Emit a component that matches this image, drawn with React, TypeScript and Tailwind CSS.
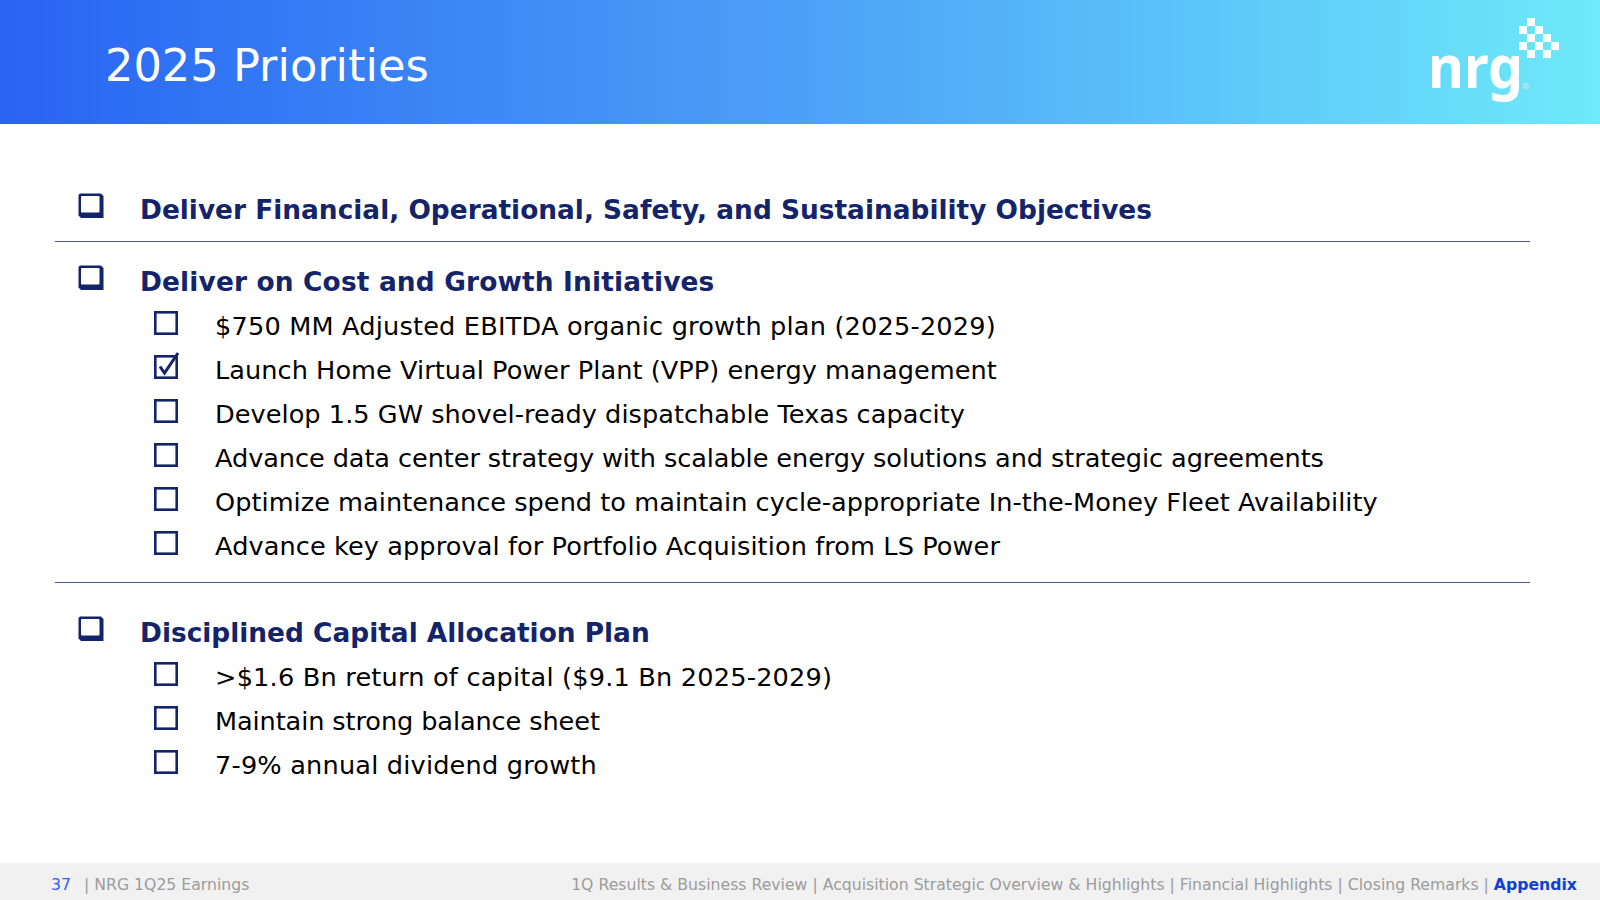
const sans = "font-['DejaVu_Sans',Verdana,sans-serif]"

const sections = [
  {
    title: 'Deliver Financial, Operational, Safety, and Sustainability Objectives',
    track: '',
    items: [],
  },
  {
    title: 'Deliver on Cost and Growth Initiatives',
    track: 'tracking-[0.16px]',
    items: [
      { text: '$750 MM Adjusted EBITDA organic growth plan (2025-2029)', track: 'tracking-[0.185px]' },
      { text: 'Launch Home Virtual Power Plant (VPP) energy management', track: 'tracking-[0.04px]', done: true },
      { text: 'Develop 1.5 GW shovel-ready dispatchable Texas capacity', track: 'tracking-[0.04px]' },
      { text: 'Advance data center strategy with scalable energy solutions and strategic agreements', track: 'tracking-[-0.085px]' },
      { text: 'Optimize maintenance spend to maintain cycle-appropriate In-the-Money Fleet Availability', track: 'tracking-[0.025px]' },
      { text: 'Advance key approval for Portfolio Acquisition from LS Power', track: 'tracking-[0.085px]' },
    ],
  },
  {
    title: 'Disciplined Capital Allocation Plan',
    track: '',
    items: [
      { text: '>$1.6 Bn return of capital ($9.1 Bn 2025-2029)', track: 'tracking-[0.195px]' },
      { text: 'Maintain strong balance sheet', track: 'tracking-[-0.105px]' },
      { text: '7-9% annual dividend growth', track: 'tracking-[0.19px]' },
    ],
  },
]

const navLinks = ['1Q Results & Business Review', 'Acquisition Strategic Overview & Highlights', 'Financial Highlights', 'Closing Remarks']

const pixels = [
  [1, 0], [0, 1], [2, 1], [1, 2], [3, 2], [0, 3], [2, 3], [4, 3], [1, 4], [3, 4],
]

function Logo() {
  return (
    <svg width="136" height="90" viewBox="0 0 136 90" className="shrink-0">
      <text x="4" y="70" fill="#fff" fontFamily="'Noto Sans', sans-serif" fontSize="60" fontWeight="700" textLength="95" lengthAdjust="spacingAndGlyphs">nrg</text>
      {pixels.map(([c, r]) => (
        <rect key={`${c}-${r}`} x={95 + c * 8} y={r * 8} width="8" height="8" fill="#fff" />
      ))}
      <circle cx="102" cy="68" r="3.2" fill="#a4dff2" />
    </svg>
  )
}

function HeadBox() {
  return (
    <svg width="26" height="25" viewBox="0 0 26 25" className="shrink-0 mb-[9px]">
      <path d="M0.5 2 L2 0.5 H23 L25.5 3 V25 H3 L0.5 22.5 Z" fill="#14246a" />
      <rect x="3" y="3" width="18.5" height="16.5" rx="1" fill="#fff" />
    </svg>
  )
}

function ItemBox({ done }: { done?: boolean }) {
  return (
    <svg width="26" height="28" viewBox="0 0 26 28" className="shrink-0 overflow-visible mb-[7px]">
      <rect x="1.3" y="3.3" width="21.4" height="21.4" fill="none" stroke="#14246a" strokeWidth="2.6" />
      {done && <path d="M6 13.5 L10.5 20 L24 0" fill="none" stroke="#14246a" strokeWidth="3" />}
    </svg>
  )
}

export default function App() {
  return (
    <div className={`w-[1600px] h-[900px] flex flex-col bg-white overflow-hidden ${sans}`}>
      <header className="h-[124px] shrink-0 flex items-start justify-between pl-[105px] pr-[40px] bg-gradient-to-r from-[#2a63f2] via-[#4da0f7] to-[#6eeaf9]">
        <h1 className="mt-[37px] text-[44.7px] leading-[58px] text-white">2025 Priorities</h1>
        <div className="mt-[18px]"><Logo /></div>
      </header>

      <main className="flex-1 pl-[55px] pr-[70px] pt-[68px]">
        {sections.map((s, i) => (
          <section key={s.title} className={i === 0 ? 'pb-[13px] border-b border-[#4a5a96]' : i === 1 ? 'pt-[22px] pb-[14px] border-b border-[#4a5a96]' : 'pt-[32px]'}>
            <div className="flex items-center h-[36px] pl-[23px]">
              <HeadBox />
              <span className={`ml-[36px] text-[26.4px] font-bold text-[#14246a] whitespace-nowrap ${s.track}`}>{s.title}</span>
            </div>
            {s.items.length > 0 && (
              <div className="mt-[4px]">
                {s.items.map(it => (
                  <div key={it.text} className="flex items-center h-[44px] pl-[99px]">
                    <ItemBox done={it.done} />
                    <span className={`ml-[35px] text-[25.6px] text-black whitespace-nowrap ${it.track}`}>{it.text}</span>
                  </div>
                ))}
              </div>
            )}
          </section>
        ))}
      </main>

      <footer className="h-[37px] shrink-0 flex items-center justify-between bg-[#f1f1f1] pt-[6px] pl-[51px] pr-[23px] text-[15.7px] text-[#9c9c9c]">
        <div className="flex">
          <span className="text-[#2a63f2] w-[33px]">37</span>
          <span>| NRG 1Q25 Earnings</span>
        </div>
        <div>
          {navLinks.map(l => <span key={l}>{l} | </span>)}
          <span className="font-bold text-[#0f3fd6]">Appendix</span>
        </div>
      </footer>
    </div>
  )
}
